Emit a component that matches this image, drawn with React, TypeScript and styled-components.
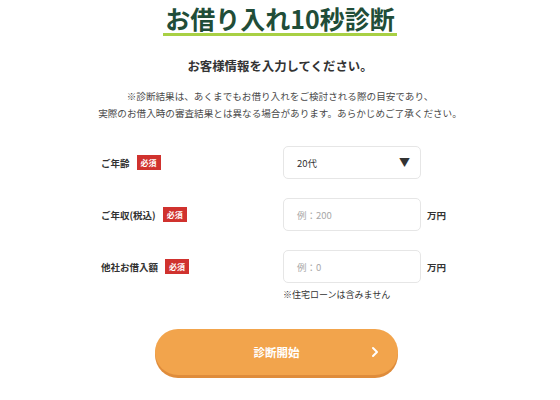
import React from "react";
import styled, { createGlobalStyle } from "styled-components";

const GlobalStyle = createGlobalStyle`
  html, body {
    margin: 0;
    padding: 0;
    background: #ffffff;
  }
  body {
    font-family: "Noto Sans CJK JP", "Noto Sans", sans-serif;
    color: #333333;
  }
`;

const Page = styled.div`
  width: 560px;
  height: 400px;
  overflow: hidden;
  display: flex;
  flex-direction: column;
  align-items: center;
`;

const Title = styled.h1`
  margin: 3px 0 0;
  padding: 0 2px;
  font-size: 25px;
  line-height: 30px;
  font-weight: 700;
  color: #214d38;
  border-bottom: 3px solid #a8d044;
`;

const Lead = styled.p`
  margin: 21px 0 0;
  font-size: 12.4px;
  line-height: 18px;
  font-weight: 700;
  color: #333333;
`;

const Notice = styled.p`
  margin: 13px 0 0;
  font-size: 9.6px;
  line-height: 17px;
  text-align: center;
  color: #4a4a4a;
`;

const Form = styled.div`
  align-self: stretch;
  margin-top: 24px;
  padding-left: 101px;
  display: grid;
  grid-template-columns: 182px 138px auto;
  row-gap: 19px;
  align-items: center;
`;

const Label = styled.div`
  display: flex;
  align-items: center;
  column-gap: 7px;
  font-size: 9.5px;
  font-weight: 700;
  color: #333333;
`;

const Badge = styled.span`
  display: inline-flex;
  align-items: center;
  justify-content: center;
  width: 24px;
  height: 15px;
  background: #d0322e;
  color: #ffffff;
  font-size: 8px;
  font-weight: 700;
`;

const Field = styled.div<{ $placeholder?: boolean }>`
  box-sizing: border-box;
  height: 33px;
  border: 1px solid #e6e6e6;
  border-radius: 5px;
  display: flex;
  align-items: center;
  justify-content: space-between;
  padding: 0 10px 0 13px;
  font-size: 9.5px;
  color: ${(p) => (p.$placeholder ? "#a8a8a8" : "#333333")};
`;

const Arrow = styled.span`
  font-size: 11px;
  color: #333333;
  line-height: 1;
`;

const Unit = styled.span`
  display: block;
  margin-left: 6px;
  font-size: 9.5px;
  line-height: 14px;
  font-weight: 700;
  color: #333333;
`;

const FieldNote = styled.div`
  grid-column: 2 / 4;
  margin-top: -14px;
  font-size: 9px;
  line-height: 14px;
  color: #333333;
`;

const StartButton = styled.button`
  align-self: flex-start;
  margin: 27px 0 0 155px;
  position: relative;
  width: 243px;
  height: 46px;
  border: none;
  border-radius: 23px;
  background: #f2a44c;
  box-shadow: 0 3px 0 #df8c3b;
  color: #ffffff;
  font-family: inherit;
  font-size: 11.5px;
  font-weight: 700;
  display: flex;
  align-items: center;
  justify-content: center;
  cursor: pointer;
`;

const Chevron = styled.svg`
  position: absolute;
  right: 18px;
  top: 50%;
  transform: translateY(-50%);
`;

type RowProps = {
  label: string;
  value: string;
  placeholder?: boolean;
  select?: boolean;
  unit?: string;
};

const Row = ({ label, value, placeholder, select, unit }: RowProps) => (
  <>
    <Label>
      {label}
      <Badge>必須</Badge>
    </Label>
    <Field $placeholder={placeholder}>
      {value}
      {select && <Arrow>▼</Arrow>}
    </Field>
    <div>{unit && <Unit>{unit}</Unit>}</div>
  </>
);

export default function App() {
  return (
    <Page>
      <GlobalStyle />
      <Title>お借り入れ10秒診断</Title>
      <Lead>お客様情報を入力してください。</Lead>
      <Notice>
        ※診断結果は、あくまでもお借り入れをご検討される際の目安であり、
        <br />
        実際のお借入時の審査結果とは異なる場合があります。あらかじめご了承ください。
      </Notice>
      <Form>
        <Row label="ご年齢" value="20代" select />
        <Row label="ご年収(税込)" value="例：200" placeholder unit="万円" />
        <Row label="他社お借入額" value="例：0" placeholder unit="万円" />
        <FieldNote>※住宅ローンは含みません</FieldNote>
      </Form>
      <StartButton>
        診断開始
        <Chevron width="10" height="12" viewBox="0 0 10 12">
          <polyline
            points="3,2 7,6 3,10"
            fill="none"
            stroke="#ffffff"
            strokeWidth="2"
            strokeLinecap="round"
            strokeLinejoin="round"
          />
        </Chevron>
      </StartButton>
    </Page>
  );
}
